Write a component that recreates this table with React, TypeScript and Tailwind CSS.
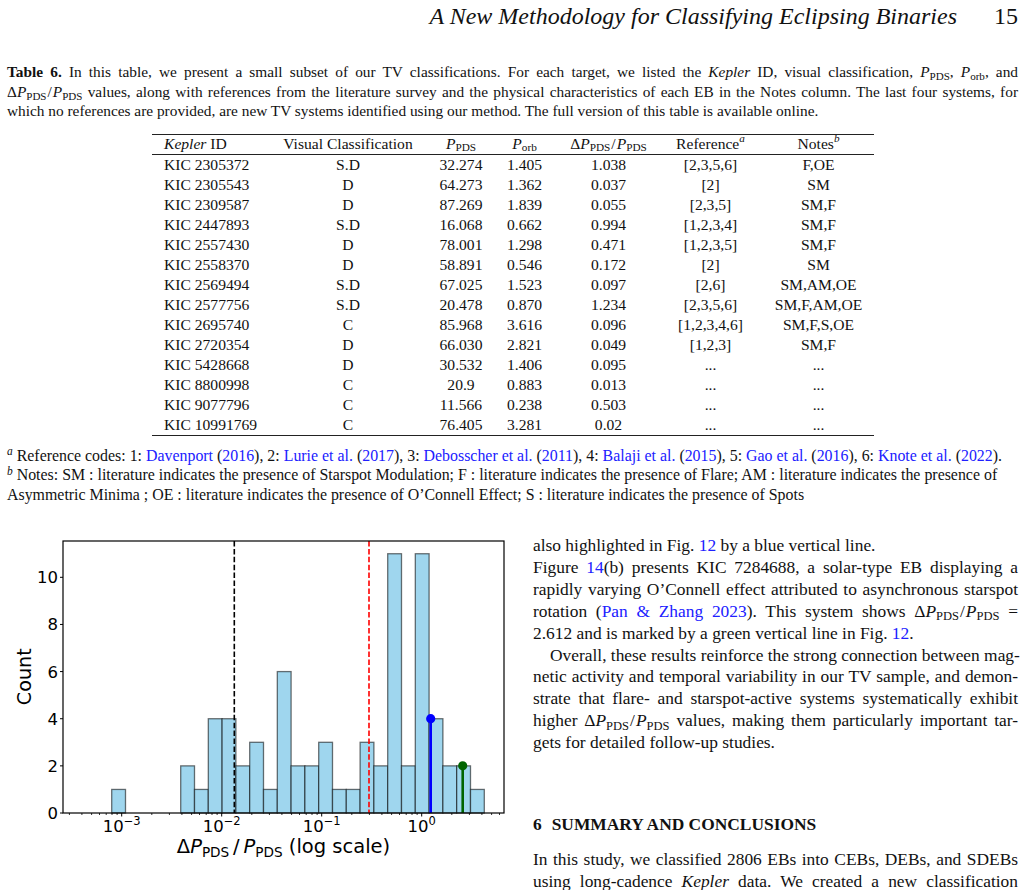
import React from 'react'

type Kids = { children: React.ReactNode }

const Sub = ({ children }: Kids) => (
  <span className="relative top-[0.3em] text-[0.72em] leading-none">{children}</span>
)

const Sup = ({ children }: Kids) => (
  <span className="relative top-[-0.45em] text-[0.72em] italic leading-none">{children}</span>
)

const Link = ({ children }: Kids) => <span className="text-[#2020ff]">{children}</span>

const Ppds = () => (
  <>
    <i>P</i>
    <Sub>PDS</Sub>
  </>
)

const Ratio = () => (
  <>
    Δ<Ppds />
    <span className="mx-[1px]">/</span>
    <Ppds />
  </>
)

// justified line: stretch to the column edge like the typeset page
const Line = ({ children, className = '' }: Kids & { className?: string }) => (
  <div className={`text-justify [text-align-last:justify] whitespace-nowrap ${className}`}>{children}</div>
)

const rows = [
  ['KIC 2305372', 'S.D', '32.274', '1.405', '1.038', '[2,3,5,6]', 'F,OE'],
  ['KIC 2305543', 'D', '64.273', '1.362', '0.037', '[2]', 'SM'],
  ['KIC 2309587', 'D', '87.269', '1.839', '0.055', '[2,3,5]', 'SM,F'],
  ['KIC 2447893', 'S.D', '16.068', '0.662', '0.994', '[1,2,3,4]', 'SM,F'],
  ['KIC 2557430', 'D', '78.001', '1.298', '0.471', '[1,2,3,5]', 'SM,F'],
  ['KIC 2558370', 'D', '58.891', '0.546', '0.172', '[2]', 'SM'],
  ['KIC 2569494', 'S.D', '67.025', '1.523', '0.097', '[2,6]', 'SM,AM,OE'],
  ['KIC 2577756', 'S.D', '20.478', '0.870', '1.234', '[2,3,5,6]', 'SM,F,AM,OE'],
  ['KIC 2695740', 'C', '85.968', '3.616', '0.096', '[1,2,3,4,6]', 'SM,F,S,OE'],
  ['KIC 2720354', 'D', '66.030', '2.821', '0.049', '[1,2,3]', 'SM,F'],
  ['KIC 5428668', 'D', '30.532', '1.406', '0.095', '...', '...'],
  ['KIC 8800998', 'C', '20.9', '0.883', '0.013', '...', '...'],
  ['KIC 9077796', 'C', '11.566', '0.238', '0.503', '...', '...'],
  ['KIC 10991769', 'C', '76.405', '3.281', '0.02', '...', '...'],
]

const cell = 'flex items-center justify-center whitespace-nowrap h-[20px]'
const firstCell = 'flex items-center justify-start whitespace-nowrap h-[20px] pl-[12px]'

const Table = () => (
  <div className="ml-[152px] w-[722px] mt-[13px] text-[15.6px] leading-[20px]">
    <div className="h-px bg-[#222]" />
    <div className="grid grid-cols-[112px_168px_58px_69px_99px_105px_111px] h-[19px]">
      <div className={firstCell + ' !h-[19px]'}>
        <i>Kepler</i>&nbsp;ID
      </div>
      <div className={cell + ' !h-[19px]'}>Visual Classification</div>
      <div className={cell + ' !h-[19px]'}>
        <Ppds />
      </div>
      <div className={cell + ' !h-[19px]'}>
        <i>P</i>
        <Sub>orb</Sub>
      </div>
      <div className={cell + ' !h-[19px]'}>
        <Ratio />
      </div>
      <div className={cell + ' !h-[19px]'}>
        Reference<Sup>a</Sup>
      </div>
      <div className={cell + ' !h-[19px]'}>
        Notes<Sup>b</Sup>
      </div>
    </div>
    <div className="h-px bg-[#222]" />
    <div className="grid grid-cols-[112px_168px_58px_69px_99px_105px_111px]">
      {rows.map((r) => (
        <React.Fragment key={r[0]}>
          {r.map((v, i) => (
            <div key={i} className={i === 0 ? firstCell : cell}>
              {v}
            </div>
          ))}
        </React.Fragment>
      ))}
    </div>
    <div className="h-px bg-[#222]" />
  </div>
)

// histogram of ΔP/P on a log axis
const X0 = 421.7
const DEC = 100
const xs = (lg: number) => X0 + DEC * lg
const Y0 = 278
const UNIT = 23.57
const ys = (c: number) => Y0 - c * UNIT
const counts = [1, 0, 0, 0, 0, 2, 1, 4, 4, 2, 3, 1, 6, 2, 2, 3, 1, 1, 3, 2, 11, 2, 11, 4, 2, 2, 1]
const BIN0 = -3.1
const BINW = 0.138
const LEFT = 63
const RIGHT = 504
const TOP = 6

const minorTicks: number[] = []
for (let d = -4; d <= 0; d++) {
  for (let k = 2; k <= 9; k++) {
    const x = xs(d + Math.log10(k))
    if (x > LEFT && x < RIGHT) minorTicks.push(x)
  }
}

const Histogram = () => (
  <svg width={515} height={355} className="font-['DejaVu_Sans',sans-serif]">
    {counts.map((c, i) =>
      c > 0 ? (
        <rect
          key={i}
          x={xs(BIN0 + i * BINW)}
          y={ys(c)}
          width={BINW * DEC}
          height={c * UNIT}
          fill="#9fd6ee"
          stroke="#000"
          strokeOpacity={0.55}
          strokeWidth={1.3}
        />
      ) : null,
    )}
    <line x1={234.3} x2={234.3} y1={TOP} y2={Y0} stroke="#000" strokeWidth={1.6} strokeDasharray="5.5 2.4" />
    <line x1={369} x2={369} y1={TOP} y2={Y0} stroke="#ff0000" strokeWidth={1.6} strokeDasharray="5.5 2.4" />
    <line x1={430.7} x2={430.7} y1={Y0} y2={ys(4)} stroke="#0000ff" strokeWidth={2.6} />
    <circle cx={430.7} cy={ys(4)} r={4.6} fill="#0000ff" />
    <line x1={462.7} x2={462.7} y1={Y0} y2={ys(2)} stroke="#006400" strokeWidth={2.6} />
    <circle cx={462.7} cy={ys(2)} r={4.6} fill="#006400" />
    <rect x={LEFT} y={TOP} width={RIGHT - LEFT} height={Y0 - TOP} fill="none" stroke="#000" strokeWidth={1.2} />

    {[0, 2, 4, 6, 8, 10].map((n) => (
      <g key={n}>
        <line x1={60} x2={LEFT} y1={ys(n)} y2={ys(n)} stroke="#000" strokeWidth={1} />
        <text x={58} y={ys(n) + 6} textAnchor="end" fontSize={16.5} fill="#000">
          {n}
        </text>
      </g>
    ))}

    {minorTicks.map((x, i) => (
      <line key={i} x1={x} x2={x} y1={Y0} y2={Y0 + 2} stroke="#000" strokeWidth={0.8} />
    ))}
    {[-3, -2, -1, 0].map((d) => (
      <g key={d}>
        <line x1={xs(d)} x2={xs(d)} y1={Y0} y2={Y0 + 3.5} stroke="#000" strokeWidth={1} />
        <text x={xs(d)} y={297} textAnchor="middle" fontSize={16.5} fill="#000">
          10
          <tspan fontSize={11.5} dy={-7}>
            {d === 0 ? '0' : '\u2212' + -d}
          </tspan>
        </text>
      </g>
    ))}

    <text x={283.5} y={318} textAnchor="middle" fontSize={19.5} fill="#000">
      Δ<tspan fontStyle="italic">P</tspan>
      <tspan fontSize={13.6} dy={3.5}>
        PDS
      </tspan>
      <tspan dy={-3.5}>{'\u2009/\u2009'}</tspan>
      <tspan fontStyle="italic">P</tspan>
      <tspan fontSize={13.6} dy={3.5}>
        PDS
      </tspan>
      <tspan dy={-3.5}> (log scale)</tspan>
    </text>
    <text x={31} y={141.7} textAnchor="middle" fontSize={19.2} fill="#000" transform="rotate(-90 31 141.7)">
      Count
    </text>
  </svg>
)

export default function App() {
  return (
    <div className="w-[1025px] h-[890px] overflow-hidden bg-white text-[#111] font-['Liberation_Serif',serif]">
      <header className="flex justify-end items-center gap-[37px] pr-[7px] h-[32px] text-[24px] leading-none">
        <span className="italic">A New Methodology for Classifying Eclipsing Binaries</span>
        <span>15</span>
      </header>

      <div className="mt-[30px] px-[7px] text-[15.35px] leading-[19.5px]">
        <Line>
          <b>Table 6.</b> In this table, we present a small subset of our TV classifications. For each target, we listed
          the <i>Kepler</i> ID, visual classification, <Ppds />, <i>P</i>
          <Sub>orb</Sub>, and
        </Line>
        <Line>
          <Ratio /> values, along with references from the literature survey and the physical characteristics of each EB
          in the Notes column. The last four systems, for
        </Line>
        <div>
          which no references are provided, are new TV systems identified using our method. The full version of this
          table is available online.
        </div>
      </div>

      <Table />

      <div className="mt-[10px] px-[7px] text-[15.9px] leading-[19.5px]">
        <div className="whitespace-nowrap">
          <Sup>a</Sup> Reference codes: 1: <Link>Davenport</Link> (<Link>2016</Link>), 2: <Link>Lurie et al.</Link> (
          <Link>2017</Link>), 3: <Link>Debosscher et al.</Link> (<Link>2011</Link>), 4: <Link>Balaji et al.</Link> (
          <Link>2015</Link>), 5: <Link>Gao et al.</Link> (<Link>2016</Link>), 6: <Link>Knote et al.</Link> (
          <Link>2022</Link>).
        </div>
        <div className="whitespace-nowrap">
          <Sup>b</Sup> Notes: SM : literature indicates the presence of Starspot Modulation; F : literature indicates the
          presence of Flare; AM : literature indicates the presence of
        </div>
        <div className="whitespace-nowrap">
          Asymmetric Minima ; OE : literature indicates the presence of O’Connell Effect; S : literature indicates the
          presence of Spots
        </div>
      </div>

      <div className="mt-[31px] flex">
        <div className="w-[533px] shrink-0">
          <Histogram />
        </div>
        <div className="w-[485px] text-[17.4px] leading-[21.9px]">
          <div>
            also highlighted in Fig. <Link>12</Link> by a blue vertical line.
          </div>
          <Line>
            Figure <Link>14</Link>(b) presents KIC 7284688, a solar-type EB displaying a
          </Line>
          <Line>rapidly varying O’Connell effect attributed to asynchronous starspot</Line>
          <Line>
            rotation (<Link>Pan &amp; Zhang 2023</Link>). This system shows <Ratio /> =
          </Line>
          <div>
            2.612 and is marked by a green vertical line in Fig. <Link>12</Link>.
          </div>
          <Line className="indent-[17px]">Overall, these results reinforce the strong connection between mag-</Line>
          <Line>netic activity and temporal variability in our TV sample, and demon-</Line>
          <Line>strate that flare- and starspot-active systems systematically exhibit</Line>
          <Line>
            higher <Ratio /> values, making them particularly important tar-
          </Line>
          <div>gets for detailed follow-up studies.</div>

          <div className="mt-[60px] font-bold">
            <span className="mr-[10px]">6</span>SUMMARY AND CONCLUSIONS
          </div>
          <Line className="mt-[13px]">In this study, we classified 2806 EBs into CEBs, DEBs, and SDEBs</Line>
          <Line>
            using long-cadence <i>Kepler</i> data. We created a new classification
          </Line>
        </div>
      </div>
    </div>
  )
}
